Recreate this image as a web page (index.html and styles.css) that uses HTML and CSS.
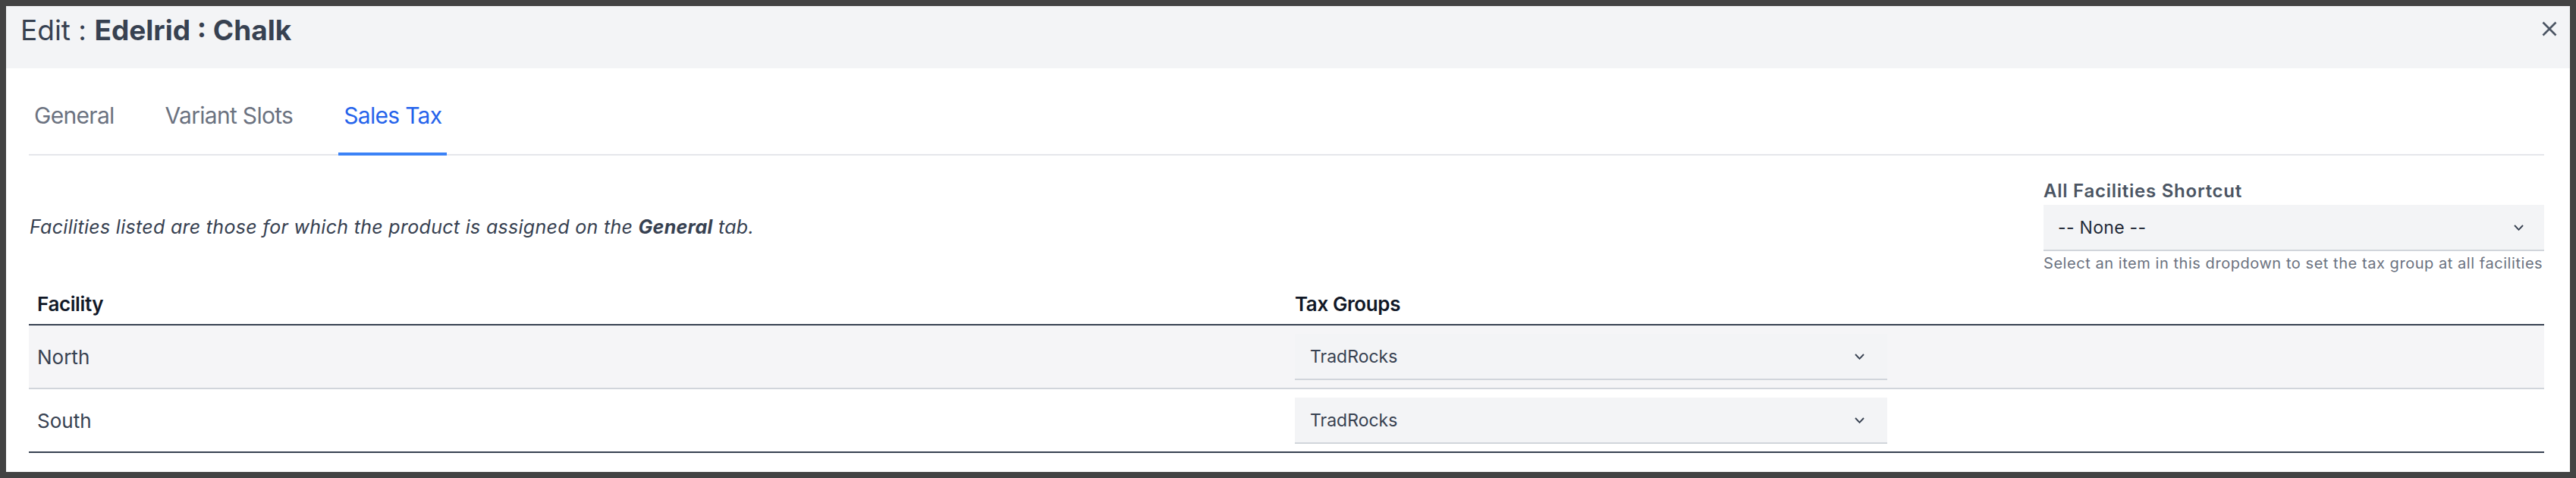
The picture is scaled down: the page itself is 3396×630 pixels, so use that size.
FILE: index.html
```html
<!DOCTYPE html>
<html lang="en">
<head>
<meta charset="utf-8">
<title>Edit : Edelrid : Chalk</title>
<link rel="stylesheet" href="styles.css">
</head>
<body>
<div class="modal">
  <header class="modal-header">
    <h1 class="title">Edit : <strong>Edelrid : Chalk</strong></h1>
    <button class="close" aria-label="Close">
      <svg width="20" height="20" viewBox="0 0 20 20"><path d="M1.5 1.5 L18.5 18.5 M18.5 1.5 L1.5 18.5" stroke="#4b5563" stroke-width="2.6" stroke-linecap="butt" fill="none"/></svg>
    </button>
  </header>
  <div class="content">
    <nav class="tabs">
      <span class="tab">General</span>
      <span class="tab">Variant Slots</span>
      <span class="tab active">Sales Tax</span>
    </nav>
    <div class="info-row">
      <p class="desc">Facilities listed are those for which the product is assigned on the <b>General</b> tab.</p>
      <div class="shortcut">
        <div class="shortcut-label">All Facilities Shortcut</div>
        <div class="select select-shortcut">
          <span class="select-value dark">-- None --</span>
          <svg class="chev" width="13" height="8" viewBox="0 0 13 8"><path d="M1 1 L6.5 6.8 L12 1" stroke="#374151" stroke-width="1.9" fill="none"/></svg>
        </div>
        <div class="help">Select an item in this dropdown to set the tax group at all facilities</div>
      </div>
    </div>
    <table class="grid">
      <colgroup><col class="c1"><col class="c2"></colgroup>
      <thead>
        <tr><th>Facility</th><th>Tax Groups</th></tr>
      </thead>
      <tbody>
        <tr class="alt">
          <td>North</td>
          <td>
            <div class="select select-row">
              <span class="select-value">TradRocks</span>
              <svg class="chev" width="13" height="8" viewBox="0 0 13 8"><path d="M1 1 L6.5 6.8 L12 1" stroke="#374151" stroke-width="1.9" fill="none"/></svg>
            </div>
          </td>
        </tr>
        <tr class="last">
          <td>South</td>
          <td>
            <div class="select select-row">
              <span class="select-value">TradRocks</span>
              <svg class="chev" width="13" height="8" viewBox="0 0 13 8"><path d="M1 1 L6.5 6.8 L12 1" stroke="#374151" stroke-width="1.9" fill="none"/></svg>
            </div>
          </td>
        </tr>
      </tbody>
    </table>
  </div>
</div>
</body>
</html>
```
FILE: styles.css
```css
* { box-sizing: border-box; }
html, body { margin: 0; }
body {
  background: #434343;
  padding: 8px;
  height: 630px;
  font-family: Inter, "Noto Sans", sans-serif;
}
.modal {
  background: #ffffff;
  height: 614px;
  overflow: hidden;
}
.modal-header {
  background: #f3f4f6;
  height: 82px;
  padding: 9px 17px 0 19px;
  display: flex;
  justify-content: space-between;
  align-items: flex-start;
}
.title {
  margin: 0;
  font-size: 37px;
  line-height: 45px;
  font-weight: 400;
  color: #374151;
}
.title strong { font-weight: 700; }
.close {
  margin-top: 11px;
  padding: 0;
  border: 0;
  background: transparent;
  width: 20px;
  height: 20px;
  display: block;
}
.close svg { display: block; }
.content {
  padding: 0 34px 0 30px;
}
.tabs {
  display: flex;
  gap: 53px;
  padding-top: 44px;
  border-bottom: 2px solid #e5e7eb;
}
.tab {
  font-size: 30px;
  line-height: 36px;
  letter-spacing: -0.7px;
  padding: 0 7px 31px;
  margin-bottom: -2px;
  border-bottom: 4px solid transparent;
  color: #6b7280;
}
.tab.active {
  color: #2563eb;
  border-bottom-color: #3b82f6;
}
.info-row {
  display: flex;
  justify-content: space-between;
  align-items: center;
  margin-top: 33px;
}
.desc {
  margin: 0;
  padding-left: 1px;
  font-size: 25px;
  line-height: 32px;
  letter-spacing: 0.3px;
  font-style: italic;
  color: #374151;
}
.desc b { font-weight: 700; }
.shortcut {
  width: 660px;
}
.shortcut-label {
  font-size: 24px;
  line-height: 28px;
  letter-spacing: 0.75px;
  font-weight: 600;
  color: #4b5563;
}
.select {
  display: flex;
  align-items: center;
  justify-content: space-between;
  height: 61px;
  background: #f3f4f6;
  border-bottom: 2px solid #d1d5db;
  padding: 0 27px 0 20px;
  font-size: 23px;
  letter-spacing: 0.3px;
  color: #374151;
}
.select-shortcut {
  margin-top: 4px;
  padding-left: 19px;
}
.select-value.dark { color: #1f2937; }
.chev { display: block; flex: none; }
.help {
  margin-top: 4px;
  font-size: 20px;
  line-height: 24px;
  letter-spacing: 0.55px;
  color: #6b7280;
  white-space: nowrap;
}
.grid {
  margin-top: 18px;
  width: 100%;
  border-collapse: collapse;
  table-layout: fixed;
}
.c1, .c2 { width: 50%; }
.grid th {
  text-align: left;
  font-size: 26px;
  line-height: 32px;
  letter-spacing: -0.4px;
  font-weight: 600;
  color: #111827;
  padding: 8px 11px 10px;
  border-bottom: 2px solid #374151;
}
.grid td {
  font-size: 26px;
  line-height: 32px;
  color: #374151;
  padding: 11px 11px 10px;
  vertical-align: middle;
  border-bottom: 2px solid #d1d5db;
}
.grid tr.alt td { background: #f5f5f7; }
.grid tr.last td { border-bottom-color: #374151; }
.select-row {
  width: 781px;
  padding-left: 20px;
  padding-right: 30px;
  letter-spacing: 0;
}
```
